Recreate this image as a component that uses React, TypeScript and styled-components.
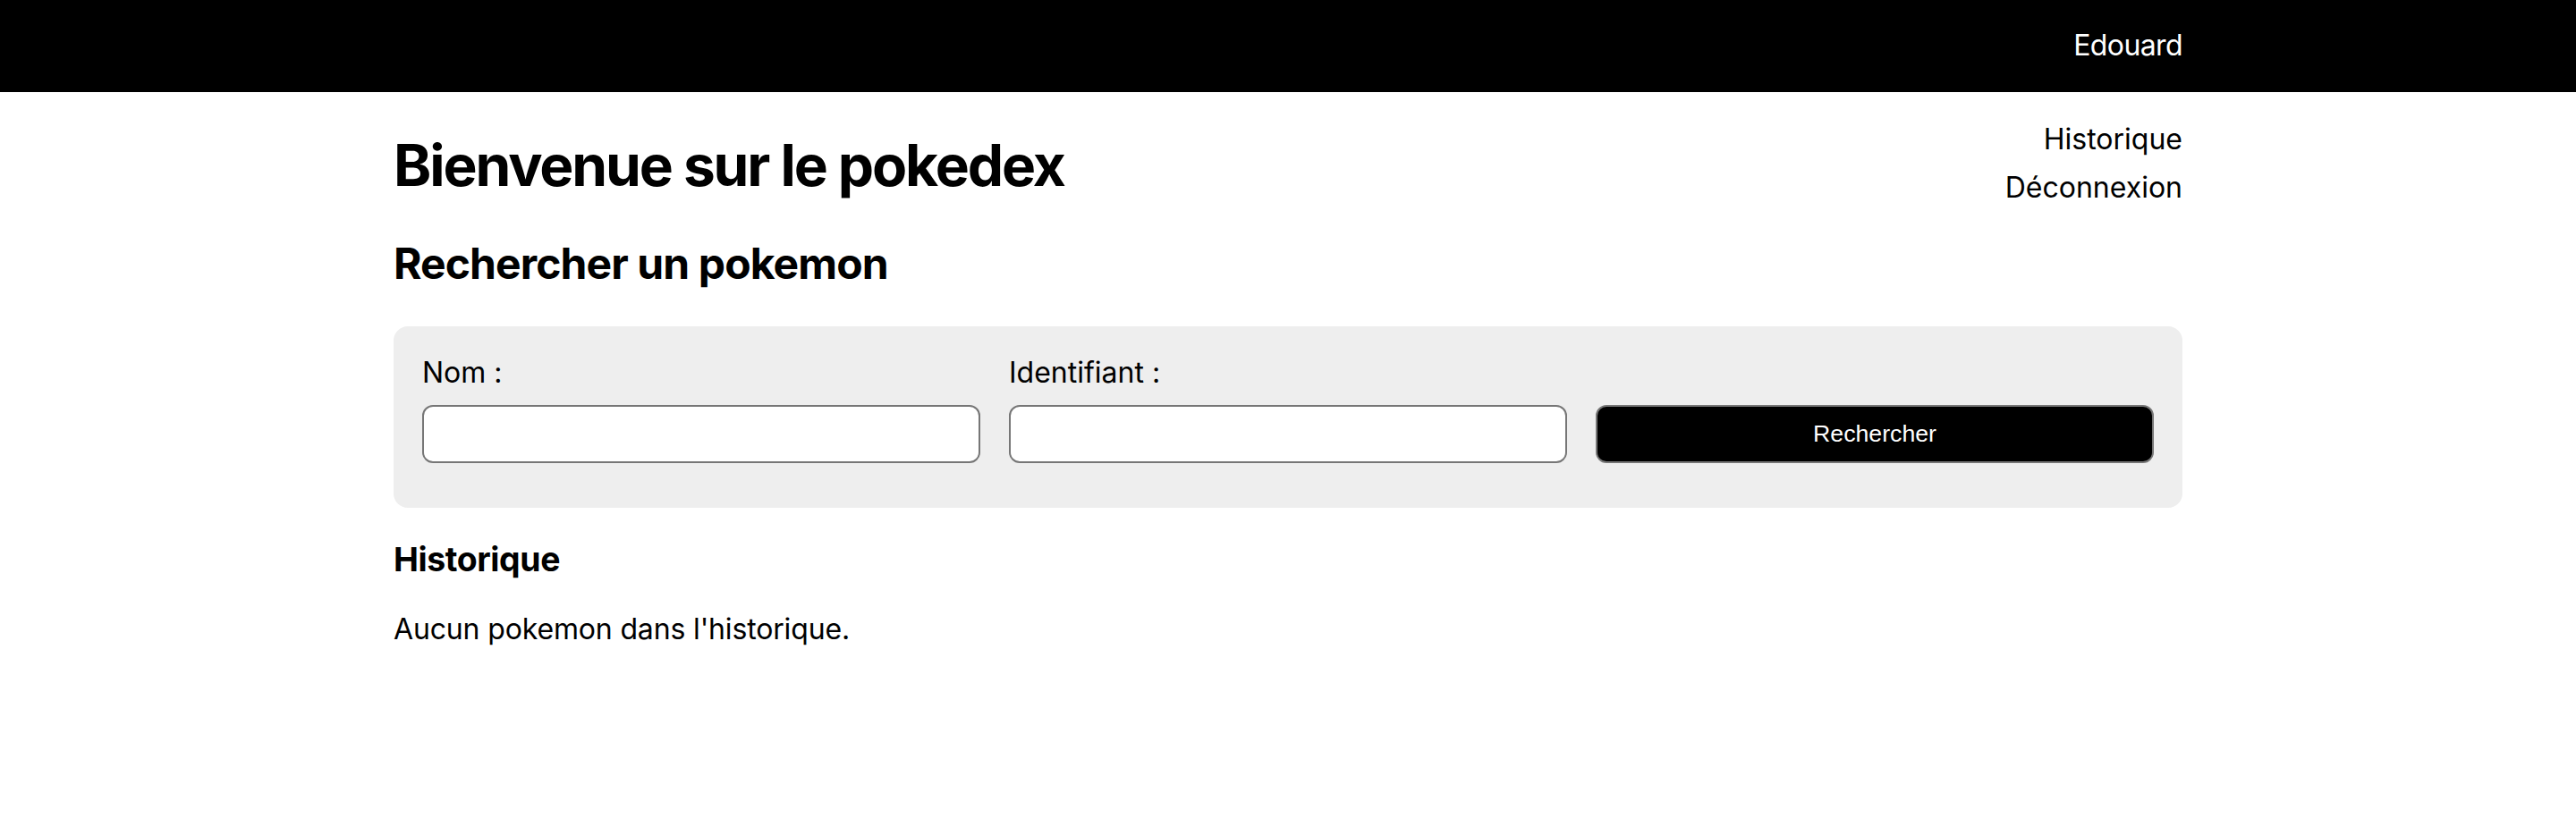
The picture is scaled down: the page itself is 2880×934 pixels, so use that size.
import React from "react";
import styled, { createGlobalStyle } from "styled-components";

const GlobalStyle = createGlobalStyle`
  html, body {
    margin: 0;
    padding: 0;
    background: #ffffff;
    color: #000000;
    font-family: Inter, "Noto Sans", Arial, sans-serif;
    font-size: 32px;
  }
  * { box-sizing: border-box; }
`;

const Header = styled.header`
  background: #000000;
  color: #ffffff;
  padding: 32px 0;
`;

const Container = styled.div`
  width: 2000px;
  margin: 0 auto;
`;

const HeaderInner = styled(Container)`
  display: flex;
  justify-content: flex-end;
  align-items: center;
`;

const UserName = styled.span`
  font-size: 32px;
  line-height: 38.7px;
  letter-spacing: -0.6px;
`;

const TopRow = styled.div`
  display: flex;
  justify-content: space-between;
  align-items: flex-start;
`;

const Title = styled.h1`
  font-size: 64px;
  line-height: 77.4px;
  font-weight: 700;
  margin: 43px 0;
  letter-spacing: -2.1px;
`;

const Nav = styled.nav`
  display: flex;
  flex-direction: column;
  align-items: flex-end;
  gap: 16px;
  padding-top: 34px;
`;

const NavLink = styled.a`
  font-size: 32px;
  line-height: 38.7px;
  color: #000000;
  text-decoration: none;
  cursor: pointer;
`;

const SectionTitle = styled.h2`
  font-size: 48px;
  line-height: 58px;
  font-weight: 700;
  margin: 0 0 41px;
  letter-spacing: -0.9px;
`;

const SearchBox = styled.form`
  background: #eeeeee;
  border-radius: 16px;
  padding: 33px 32px 50px;
  display: grid;
  grid-template-columns: repeat(3, 1fr);
  column-gap: 32px;
  align-items: end;
`;

const Field = styled.div`
  display: flex;
  flex-direction: column;
  gap: 16px;
`;

const Label = styled.label`
  font-size: 32px;
  line-height: 38.7px;
`;

const Input = styled.input`
  height: 65px;
  border: 2px solid #767676;
  border-radius: 12px;
  background: #ffffff;
  font-family: inherit;
  font-size: 32px;
  padding: 0 8px;
`;

const SubmitButton = styled.button`
  height: 65px;
  border: 2px solid #767676;
  border-radius: 12px;
  background: #000000;
  color: #ffffff;
  font-family: "Liberation Sans", Arial, sans-serif;
  font-size: 26.7px;
  cursor: pointer;
`;

const HistoryTitle = styled.h3`
  font-size: 37.4px;
  line-height: 45.3px;
  font-weight: 700;
  margin: 35px 0 37px;
  letter-spacing: -0.4px;
`;

const EmptyText = styled.p`
  font-size: 32px;
  line-height: 38.7px;
  margin: 0 0 32px;
  letter-spacing: -0.15px;
`;

export default function App() {
  return (
    <>
      <GlobalStyle />
      <Header>
        <HeaderInner>
          <UserName>Edouard</UserName>
        </HeaderInner>
      </Header>
      <Container>
        <TopRow>
          <Title>Bienvenue sur le pokedex</Title>
          <Nav>
            <NavLink>Historique</NavLink>
            <NavLink>Déconnexion</NavLink>
          </Nav>
        </TopRow>
        <SectionTitle>Rechercher un pokemon</SectionTitle>
        <SearchBox onSubmit={(e) => e.preventDefault()}>
          <Field>
            <Label htmlFor="nom">Nom :</Label>
            <Input id="nom" type="text" />
          </Field>
          <Field>
            <Label htmlFor="identifiant">Identifiant :</Label>
            <Input id="identifiant" type="text" />
          </Field>
          <SubmitButton type="submit">Rechercher</SubmitButton>
        </SearchBox>
        <HistoryTitle>Historique</HistoryTitle>
        <EmptyText>Aucun pokemon dans l'historique.</EmptyText>
      </Container>
    </>
  );
}
